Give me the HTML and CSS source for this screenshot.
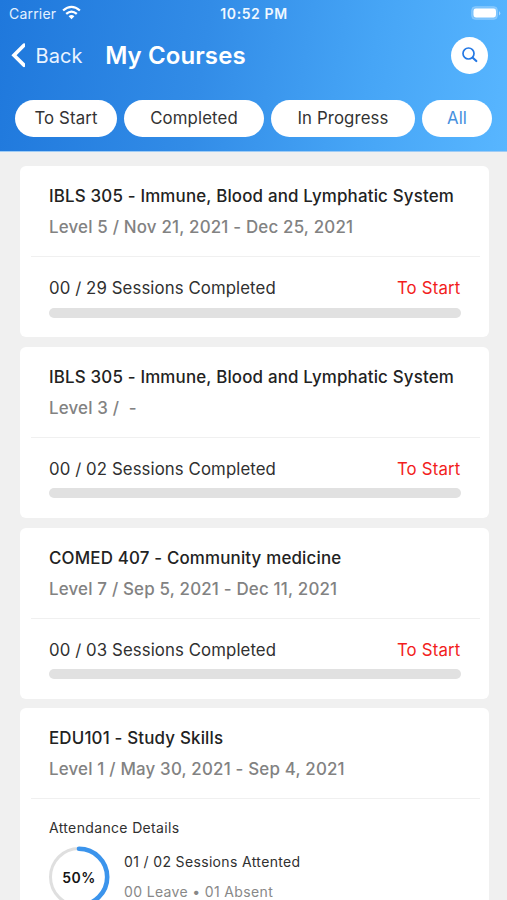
FILE: index.html
```html
<!DOCTYPE html>
<html lang="en">
<head>
<meta charset="utf-8">
<title>My Courses</title>
<link rel="stylesheet" href="styles.css">
</head>
<body>
<header class="header">
  <div class="status">
    <div class="carrier"><span>Carrier</span>
      <svg width="19" height="15" viewBox="0 0 19 15" fill="none" stroke="#fff" stroke-width="2.3"><path d="M1.1 5.5Q9.5-1.8 17.9 5.5M4.2 8.9Q9.5 4.3 14.8 8.9"/><path d="M6.6 11.2Q9.5 8.8 12.4 11.2L9.5 14.2Z" fill="#fff" stroke="none"/></svg>
    </div>
    <time class="clock">10:52 PM</time>
    <svg class="battery" width="30" height="14" viewBox="0 0 30 14"><rect x=".5" y=".5" width="26" height="13" rx="4" fill="#fff" fill-opacity=".25" stroke="#fff" stroke-opacity=".15"/><rect x="2.5" y="2.5" width="22.5" height="9" rx="2.4" fill="#fff"/><path d="M28 5v4.500q2.600-2.250 0-4.500Z" fill="#fff" fill-opacity=".5"/></svg>
  </div>
  <div class="nav">
    <svg class="chevron" width="16" height="26" viewBox="0 0 16 26" fill="none" stroke="#fff" stroke-width="3.700" stroke-linecap="round" stroke-linejoin="miter"><path d="M15 3.200L5 13.200L15 23.200"/></svg>
    <span class="back">Back</span>
    <h1 class="heading">My Courses</h1>
    <button class="search" aria-label="Search"><svg width="18" height="18" viewBox="0 0 18 18" fill="none" stroke="#2478e4" stroke-linecap="round"><circle cx="7.500" cy="7.500" r="5.500" stroke-width="1.700"/><path d="M12 12L15.300 15" stroke-width="2.200"/></svg></button>
  </div>
  <div class="filters">
    <button class="pill start">To Start</button>
    <button class="pill done">Completed</button>
    <button class="pill progress">In Progress</button>
    <button class="pill all">All</button>
  </div>
</header>
<main class="list">
  <article class="card">
    <div class="top"><h2 class="title">IBLS 305 - Immune, Blood and Lymphatic System</h2><p class="meta">Level 5 / Nov 21, 2021 - Dec 25, 2021</p></div>
    <div class="row"><span class="count">00 / 29 Sessions Completed</span><span class="state">To Start</span></div>
    <div class="bar"></div>
  </article>
  <article class="card">
    <div class="top"><h2 class="title">IBLS 305 - Immune, Blood and Lymphatic System</h2><p class="meta">Level 3 / &nbsp;-</p></div>
    <div class="row"><span class="count">00 / 02 Sessions Completed</span><span class="state">To Start</span></div>
    <div class="bar"></div>
  </article>
  <article class="card">
    <div class="top"><h2 class="title">COMED 407 - Community medicine</h2><p class="meta">Level 7 / Sep 5, 2021 - Dec 11, 2021</p></div>
    <div class="row"><span class="count">00 / 03 Sessions Completed</span><span class="state">To Start</span></div>
    <div class="bar"></div>
  </article>
  <article class="card last">
    <div class="top"><h2 class="title">EDU101 - Study Skills</h2><p class="meta">Level 1 / May 30, 2021 - Sep 4, 2021</p></div>
    <h3 class="details">Attendance Details</h3>
    <div class="attendance">
      <div class="ring">
        <svg width="62" height="62" viewBox="0 0 62 62" fill="none"><circle cx="31" cy="31" r="28.500" stroke="#dfdfdf" stroke-width="3"/><path d="M31 2.800A28.200 28.200 0 0 1 31 59.200" stroke="#3b94ec" stroke-width="4.600" stroke-linecap="round"/></svg>
        <span class="percent">50%</span>
      </div>
      <div class="figures"><p class="attended">01 / 02 Sessions Attented</p><p class="absent">00 Leave • 01 Absent</p></div>
    </div>
  </article>
</main>
</body>
</html>
```
FILE: styles.css
```css
* { box-sizing: border-box; }
body {
  margin: 0;
  background: #f0f0f0;
  color: #303030;
  font-family: Inter, "Liberation Sans", sans-serif;
}
h1, h2, h3, p { margin: 0; }
button { padding: 0; border: 0; font: inherit; }
svg { display: block; }
.header {
  height: 152px;
  color: #fff;
  background: linear-gradient(99deg, #1f78dc 0%, #328ce7 40%, #46a5f6 72%, #58b6ff 100%);
  border-bottom: 1px solid #9fccf5;
}
.status {
  display: grid;
  grid-template-columns: 1fr auto 1fr;
  align-items: center;
  height: 27px;
  padding: 0 6px 0 9px;
  font-size: 14px;
}
.carrier { display: flex; align-items: center; gap: 6px; letter-spacing: .2px; color: #e4f1ff; }
.carrier svg { margin-top: -2px; }
.clock { font-weight: 600; letter-spacing: .6px; color: #f0f8ff; margin-right: 2px; }
.battery { justify-self: end; margin-top: -1px; }
.nav { display: flex; align-items: center; height: 56px; padding: 0 19px 0 9px; }
.back { margin-left: 10.500px; padding-top: 1px; font-size: 20px; letter-spacing: .1px; color: #eaf4ff; }
.heading { margin-left: 22.500px; font-size: 24px; font-weight: 600; letter-spacing: .1px; }
.search { display: grid; place-items: center; width: 37px; height: 37px; margin-left: auto; border-radius: 50%; background: #fff; }
.filters { display: flex; gap: 7px; padding: 17px 15px 0; }
.pill { height: 37px; padding-bottom: 1px; border-radius: 19px; background: #fff; color: #333; font-size: 16.800px; letter-spacing: .12px; }
.start { width: 102px; }
.done { width: 140px; }
.progress { width: 144px; }
.all { width: 70px; color: #4690de; }
.list { display: flex; flex-direction: column; gap: 9.8px; height: 748px; overflow: hidden; padding: 14px 18px 0 20px; }
.card { height: 171px; flex: none; padding: 0 9px 0 11px; border-radius: 6px; background: #fff; }
.top { height: 91px; padding: 16px 18px 0; border-bottom: 1px solid #f0f0f0; white-space: nowrap; }
.title { font-size: 16.900px; line-height: 28px; font-weight: 500; letter-spacing: .18px; color: #222; }
.meta { margin-top: 3px; font-size: 16.900px; line-height: 28px; font-weight: 500; letter-spacing: .19px; color: #828282; }
.row { display: flex; justify-content: space-between; padding: 17px 19.500px 0 18px; font-size: 16.800px; line-height: 28px; letter-spacing: .09px; }
.state { color: #f21d20; letter-spacing: .18px; }
.bar { height: 10px; margin: 5.500px 19.500px 0 18px; border-radius: 5px; background: #e1e1e1; }
.last { height: 240px; }
.details { margin: 18px 18px 0; font-size: 14px; line-height: 22px; font-weight: 400; letter-spacing: .35px; }
.attendance { display: flex; gap: 14px; margin: 7px 17px 0; }
.ring { display: grid; }
.ring > * { grid-area: 1 / 1; }
.percent { place-self: center; font-size: 14px; font-weight: 600; color: #151515; letter-spacing: .5px; }
.figures { padding-top: 5px; font-size: 14px; line-height: 22px; letter-spacing: .35px; }
.absent { margin-top: 8px; color: #888; }
```
